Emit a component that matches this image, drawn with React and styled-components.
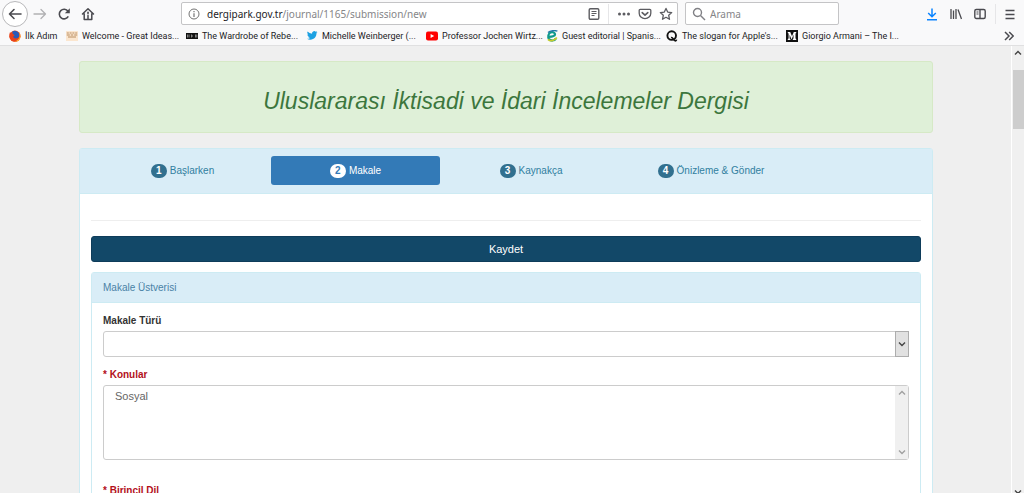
import React, { useState } from 'react';
import styled, { createGlobalStyle } from 'styled-components';

const bookmarks = [
    { title: 'İlk Adım', icon: 'firefox' },
    { title: 'Welcome - Great Ideas...', icon: 'ideas' },
    { title: 'The Wardrobe of Rebe...', icon: 'wardrobe' },
    { title: 'Michelle Weinberger (...', icon: 'twitter' },
    { title: 'Professor Jochen Wirtz...', icon: 'youtube' },
    { title: 'Guest editorial | Spanis...', icon: 'emerald' },
    { title: "The slogan for Apple's...", icon: 'quora' },
    { title: 'Giorgio Armani – The I...', icon: 'medium' }
];

const steps = ['Başlarken', 'Makale', 'Kaynakça', 'Önizleme & Gönder'];

function Favicon({ name }) {
    return (
        <svg width="12" height="12" viewBox="0 0 12 12" aria-hidden="true">
            {name === 'firefox' && (
                <>
                    <circle cx="6" cy="6.2" r="5.6" fill="#f0501e" />
                    <path d="M3.4 1.6a4.6 4.6 0 0 1 7 3.4c0 3-2 4.4-4 4.4S3 8 3.2 6z" fill="#2a5bb8" />
                    <path d="M.8 2.4C1.6 3 2.6 3 3.6 3.4c1 .5 1 1.4 2.2 1.8-.8.6-1.6.8-1.6 1.8 1 2 4.4 2 6.4-.8.4 3-1.8 5.4-4.6 5.4S.4 9.4.4 6.2C.4 4.6.5 3.4.8 2.4z" fill="#e8421c" />
                    <path d="M10.2 2.6c1.4 2 1.8 4.6.4 6.8-1 1.6-3 2.4-5 2 2.8-.6 4.800-2.400 5-4.800.1-1.400 0-2.800-.4-4z" fill="#ffb52e" />
                </>
            )}
            {name === 'ideas' && (
                <>
                    <rect y="1" width="12" height="10" fill="#fbe6cf" />
                    <path d="M.8 3h2M3.600 3h2M6.400 3h2M9.200 3h2M.8 5h3M4.800 5h2.400M8.200 5h3M2 7h8" stroke="#b98d62" strokeWidth="1.200" />
                </>
            )}
            {name === 'wardrobe' && (
                <>
                    <rect y="3" width="12" height="6" fill="#111" />
                    <path d="M1.500 4.500v3M3 4.500v3M5.500 4.500v3M7 6h-1M9.500 4.500v3M10.800 4.500v3" stroke="#bbb" strokeWidth=".7" />
                </>
            )}
            {name === 'twitter' && (
                <path
                    transform="translate(1 0) scale(.44)"
                    d="M23.600 4.900a9.900 9.900 0 0 1-2.800.8 4.900 4.900 0 0 0 2.200-2.700 9.800 9.800 0 0 1-3.100 1.200 4.900 4.900 0 0 0-8.400 4.500A14 14 0 0 1 1.300 3.600a4.900 4.900 0 0 0 1.500 6.600 4.900 4.900 0 0 1-2.200-.6v.1a4.900 4.900 0 0 0 3.900 4.800 5 5 0 0 1-2.200.1 4.900 4.900 0 0 0 4.600 3.400A9.900 9.900 0 0 1 0 20a14 14 0 0 0 7.500 2.200c9.100 0 14-7.500 14-14v-.6a10 10 0 0 0 2.100-2.700z"
                    fill="#1da1e2"
                />
            )}
            {name === 'youtube' && (
                <>
                    <rect y="1.500" width="12" height="9" rx="2" fill="#f00" />
                    <path d="M4.600 4v4L8.200 6z" fill="#fff" />
                </>
            )}
            {name === 'emerald' && (
                <>
                    <path d="M9.800 8.600C8.400 11 4.800 11.200 3 9c-1.400-2-.8-5.200 1.400-6.400C6.600 1.400 9.400 2.600 9 4.600 8.600 6 6 6.600 3 6.800" fill="none" stroke="#0f9a8c" strokeWidth="2.200" />
                    <path d="M2 9.400c2 2 6.400 1.800 8.800-1.800" fill="none" stroke="#c5cc2b" strokeWidth="1.800" />
                    <path d="M2 2.600C4.400.4 9 .2 11.400 1.200" fill="none" stroke="#2177a8" strokeWidth="1.400" />
                </>
            )}
            {name === 'quora' && (
                <>
                    <circle cx="5.700" cy="5.600" r="4.300" fill="none" stroke="#111" strokeWidth="1.900" />
                    <path d="M5 7.600c2-.6 2.800 3 4 3.200.8.200 1.400-.3 1.500-1.100" fill="none" stroke="#111" strokeWidth="1.600" />
                </>
            )}
            {name === 'medium' && (
                <>
                    <rect width="12" height="12" fill="#111" />
                    <path d="M1.800 2h2.400L6 6.200 7.800 2h2.400v1l-.7.500v5l.7.500v1H6.800V9l.7-.5V4.800L5.600 9.500 3.600 4.800v3.700l.8.500v1H1.800V9l.8-.5v-5L1.800 3z" fill="#fff" />
                </>
            )}
        </svg>
    );
}

function Chevron({ up, size = 8 }) {
    return (
        <svg width={size} height={size} viewBox="0 0 8 8" fill="none" stroke="currentColor" strokeWidth="1.400" aria-hidden="true">
            <path d={up ? 'M1 5.500l3-3 3 3' : 'M1 2.500l3 3 3-3'} />
        </svg>
    );
}

function BrowserBar() {
    return (
        <Chrome>
            <Toolbar>
                <NavButtons>
                    <BackButton type="button" aria-label="Geri">
                        <svg width="14" height="14" viewBox="0 0 14 14" fill="none" stroke="#4a4a4f" strokeWidth="1.600" strokeLinecap="round" strokeLinejoin="round">
                            <path d="M13 7H1.500M6 2.500L1.500 7 6 11.500" />
                        </svg>
                    </BackButton>
                    <IconButton type="button" aria-label="İleri">
                        <svg width="14" height="14" viewBox="0 0 14 14" fill="none" stroke="#b1b1b3" strokeWidth="1.300" strokeLinecap="round" strokeLinejoin="round">
                            <path d="M1 7h11.500M8 2.500L12.500 7 8 11.500" />
                        </svg>
                    </IconButton>
                    <IconButton type="button" aria-label="Yenile">
                        <svg width="14" height="14" viewBox="0 0 14 14" fill="none" stroke="#4a4a4f" strokeWidth="1.600">
                            <path d="M11.300 9.400A4.800 4.800 0 1 1 11 4.200" />
                            <path d="M12.800 1.200v5H7.800z" fill="#4a4a4f" stroke="none" />
                        </svg>
                    </IconButton>
                    <IconButton type="button" aria-label="Ana sayfa">
                        <svg width="14" height="14" viewBox="0 0 14 14" fill="none" stroke="#4a4a4f" strokeWidth="1.500" strokeLinejoin="round" strokeLinecap="round">
                            <path d="M1.500 7L7 1.700 12.500 7M3.200 6.800v5.700h7.600V6.800M7 12V8.500" />
                            <path d="M7 5.300v1.400" />
                        </svg>
                    </IconButton>
                </NavButtons>
                <UrlBar>
                    <svg width="12" height="12" viewBox="0 0 12 12" fill="none" stroke="#737373" aria-hidden="true">
                        <circle cx="6" cy="6" r="5" />
                        <path d="M6 5.200V9M6 3v1.200" strokeWidth="1.200" />
                    </svg>
                    <Address>
                        dergipark.gov.tr<AddressPath>/journal/1165/submission/new</AddressPath>
                    </Address>
                    <UrlActions>
                        <IconButton type="button" aria-label="Okuyucu görünümü">
                            <svg width="12" height="14" viewBox="0 0 12 14" fill="none" stroke="#5c5c61">
                                <rect x="1.200" y="1.700" width="9.600" height="10.600" rx="1.200" strokeWidth="1.400" />
                                <path d="M3.500 4.500h5M3.500 6.500h5M3.500 8.500h3" />
                            </svg>
                        </IconButton>
                        <Divider $space="1px" />
                        <IconButton type="button" aria-label="Sayfa eylemleri">
                            <svg width="14" height="14" viewBox="0 0 14 14" fill="#5c5c61">
                                <circle cx="2.500" cy="7" r="1.500" />
                                <circle cx="7" cy="7" r="1.500" />
                                <circle cx="11.500" cy="7" r="1.500" />
                            </svg>
                        </IconButton>
                        <IconButton type="button" aria-label="Pocket'a kaydet">
                            <svg width="14" height="14" viewBox="0 0 14 14" fill="none" stroke="#5c5c61" strokeWidth="1.300" strokeLinecap="round" strokeLinejoin="round">
                                <path d="M2.200 2.300h9.600a1 1 0 0 1 1 1v2.900a5.800 5.400 0 0 1-11.600 0V3.300a1 1 0 0 1 1-1z" />
                                <path d="M4.200 5.600L7 8.200l2.800-2.600" strokeWidth="1.600" />
                            </svg>
                        </IconButton>
                        <IconButton type="button" aria-label="Yer imlerine ekle">
                            <svg width="14" height="14" viewBox="0 0 14 14" fill="none" stroke="#5c5c61" strokeWidth="1.300" strokeLinejoin="round">
                                <path d="M7 1.400l1.700 3.700 4 .5-3 2.700.8 4L7 10.300l-3.500 2 .8-4-3-2.700 4-.5z" />
                            </svg>
                        </IconButton>
                    </UrlActions>
                </UrlBar>
                <SearchBar>
                    <svg width="14" height="14" viewBox="0 0 14 14" fill="none" stroke="#808085" strokeWidth="1.400" aria-hidden="true">
                        <circle cx="5.500" cy="5.500" r="4" />
                        <path d="M8.500 8.500l4.500 4.500" />
                    </svg>
                    <SearchInput type="search" aria-label="Arama" placeholder="Arama" />
                </SearchBar>
                <Tools>
                    <IconButton type="button" aria-label="İndirilenler">
                        <svg width="12" height="14" viewBox="0 0 12 14" fill="none" stroke="#0a84ff" strokeWidth="1.500">
                            <path d="M6 1.500v8M2.200 6L6 9.700 9.800 6M1 12.700h10" />
                        </svg>
                    </IconButton>
                    <IconButton type="button" aria-label="Kitaplık">
                        <svg width="12" height="14" viewBox="0 0 12 14" fill="none" stroke="#4a4a4f" strokeWidth="1.300">
                            <path d="M1 2v10M3.500 3.500V12M6 2v10M8 2.500l3.500 9.500" />
                        </svg>
                    </IconButton>
                    <IconButton type="button" aria-label="Kenar çubuğu">
                        <svg width="12" height="14" viewBox="0 0 12 14" fill="none" stroke="#4a4a4f" strokeWidth="1.400">
                            <rect x=".8" y="2.500" width="10.400" height="9" rx="1.500" />
                            <path d="M6 2.500v9" />
                            <path d="M2.500 5h2M2.500 7h2" strokeWidth="1" />
                        </svg>
                    </IconButton>
                    <Divider $space="-3px" />
                    <IconButton type="button" aria-label="Menü">
                        <svg width="10" height="14" viewBox="0 0 10 14" fill="none" stroke="#4a4a4f" strokeWidth="1.400">
                            <path d="M.5 3.500h9M.5 7.500h9M.5 11.500h9" />
                        </svg>
                    </IconButton>
                </Tools>
            </Toolbar>
            <BookmarkBar>
                {bookmarks.map(bookmark => (
                    <Bookmark key={bookmark.title} href="#">
                        <Favicon name={bookmark.icon} />
                        {bookmark.title}
                    </Bookmark>
                ))}
                <MoreButton type="button" aria-label="Diğer yer imleri">
                    <svg width="10" height="10" viewBox="0 0 10 10" fill="none" stroke="#4a4a4f" strokeWidth="1.500">
                        <path d="M1 1l4 4-4 4M5.200 1l4 4-4 4" />
                    </svg>
                </MoreButton>
            </BookmarkBar>
        </Chrome>
    );
}

function App() {
    const [step, setStep] = useState(1);

    return (
        <Window>
            <GlobalStyle />
            <BrowserBar />
            <Viewport>
                <Page>
                    <Banner>
                        <JournalTitle>Uluslararası İktisadi ve İdari İncelemeler Dergisi</JournalTitle>
                    </Banner>
                    <Panel>
                        <Steps>
                            {steps.map((label, index) => (
                                <Step key={label} type="button" $active={index === step} onClick={() => setStep(index)}>
                                    <Badge $active={index === step}>{index + 1}</Badge>
                                    {label}
                                </Step>
                            ))}
                        </Steps>
                        <PanelBody>
                            <Rule />
                            <SaveButton type="submit">Kaydet</SaveButton>
                            <Panel>
                                <PanelHeading>Makale Üstverisi</PanelHeading>
                                <Fields>
                                    <Label htmlFor="type">Makale Türü</Label>
                                    <SelectWrap>
                                        <Select id="type" />
                                        <SelectArrow><Chevron /></SelectArrow>
                                    </SelectWrap>
                                    <Label htmlFor="topics" $required>* Konular</Label>
                                    <ListWrap>
                                        <ListBox id="topics" multiple size="4">
                                            <option>Sosyal</option>
                                        </ListBox>
                                        <ListScroll>
                                            <Chevron up />
                                            <Chevron />
                                        </ListScroll>
                                    </ListWrap>
                                    <Label htmlFor="language" $required>* Birincil Dil</Label>
                                    <SelectWrap>
                                        <Select id="language" />
                                        <SelectArrow><Chevron /></SelectArrow>
                                    </SelectWrap>
                                </Fields>
                            </Panel>
                        </PanelBody>
                    </Panel>
                </Page>
                <ScrollBar>
                    <Chevron up />
                    <Thumb />
                    <Chevron />
                </ScrollBar>
            </Viewport>
        </Window>
    );
}

export default App;

const GlobalStyle = createGlobalStyle`
    * {
        box-sizing: border-box;
    }

    body {
        margin: 0;
        background: #efefef;
        font-family: "Liberation Sans", Arial, sans-serif;
    }

    button, input, select {
        font-family: inherit;
    }
`;

const Window = styled.div`
    display: flex;
    flex-direction: column;
    height: 100vh;
    overflow: hidden;
`;

const Chrome = styled.header`
    background: #f9f9fa;
    border-bottom: 1px solid #e0e0e1;
    font-family: "Noto Sans", sans-serif;
`;

const Toolbar = styled.div`
    display: flex;
    align-items: center;
    height: 27px;
    padding: 0 9px 0 2px;
`;

const NavButtons = styled.div`
    display: flex;
    align-items: center;
    gap: 10px;
    flex: 0 0 179px;
`;

const IconButton = styled.button`
    display: flex;
    padding: 0;
    border: 0;
    background: none;
`;

const BackButton = styled(IconButton)`
    align-items: center;
    justify-content: center;
    width: 26px;
    height: 26px;
    margin-right: -5px;
    border: 1px solid #b8b8ba;
    border-radius: 50%;
    background: #fff;
`;

const UrlBar = styled.div`
    display: flex;
    align-items: center;
    flex: 1;
    height: 23px;
    padding: 0 4px 0 6px;
    border: 1px solid #c4c4c6;
    border-radius: 2px;
    background: #fff;
`;

const Address = styled.span`
    margin-left: 7px;
    color: #1c1c1f;
    font-size: 10px;
    white-space: nowrap;
`;

const AddressPath = styled.span`
    color: #858588;
`;

const UrlActions = styled.div`
    display: flex;
    align-items: center;
    gap: 7px;
    margin-left: auto;
`;

const Divider = styled.span`
    width: 1px;
    height: 20px;
    margin: 0 ${props => props.$space};
    background: #e6e6e8;
`;

const SearchBar = styled.div`
    display: flex;
    align-items: center;
    gap: 4px;
    flex: 0 0 154px;
    min-width: 0;
    height: 23px;
    margin-left: 7px;
    padding: 0 6px;
    border: 1px solid #c4c4c6;
    border-radius: 2px;
    background: #fff;

    svg {
        flex: none;
    }
`;

const SearchInput = styled.input`
    flex: 1;
    min-width: 0;
    padding: 0;
    border: 0;
    outline: 0;
    background: none;
    font-size: 10px;

    &::placeholder {
        color: #858588;
    }
`;

const Tools = styled.div`
    display: flex;
    align-items: center;
    justify-content: flex-end;
    gap: 12px;
    flex: 0 0 176px;
`;

const BookmarkBar = styled.nav`
    display: flex;
    align-items: center;
    gap: 8px;
    height: 18px;
    padding: 0 10px 0 9px;
    font-family: Roboto, "Noto Sans", sans-serif;
`;

const Bookmark = styled.a`
    display: flex;
    align-items: center;
    gap: 4px;
    width: 112px;
    color: #1c1c1f;
    font-size: 9px;
    line-height: 14px;
    text-decoration: none;
    white-space: nowrap;

    &:first-child {
        width: 49px;
    }

    svg {
        flex: none;
    }
`;

const MoreButton = styled(IconButton)`
    margin-left: auto;
`;

const Viewport = styled.div`
    display: flex;
    flex: 1;
    min-height: 0;
`;

const Page = styled.main`
    flex: 1;
    overflow: hidden;
    padding: 15px 78px 0 79px;
`;

const Banner = styled.div`
    padding: 24px 12px 16px;
    margin-bottom: 15px;
    border: 1px solid #d6e9c6;
    border-radius: 3px;
    background: #dff0d8;
    text-align: center;
`;

const JournalTitle = styled.h1`
    margin: 0;
    color: #3c763d;
    font-size: 23px;
    font-style: italic;
    font-weight: 400;
    line-height: 30px;
`;

const Panel = styled.section`
    border: 1px solid #cdebf3;
    border-radius: 3px;
    background: #fff;
`;

const Steps = styled.nav`
    display: grid;
    grid-template-columns: 173fr 169fr 178fr 178fr 115fr;
    gap: 2px;
    padding: 7px 15px 8px 16px;
    border-bottom: 1px solid #cdebf3;
    background: #d9edf7;
`;

const Step = styled.button`
    display: flex;
    align-items: center;
    justify-content: center;
    gap: 3px;
    height: 29px;
    padding: 0;
    border: 0;
    border-radius: 3px;
    background: ${props => (props.$active ? '#337ab7' : 'transparent')};
    color: ${props => (props.$active ? '#fff' : '#31809f')};
    font-size: 10px;
`;

const Badge = styled.span`
    width: 16px;
    border-radius: 8px;
    background: ${props => (props.$active ? '#fff' : '#31708f')};
    color: ${props => (props.$active ? '#337ab7' : '#fff')};
    font-weight: 700;
    line-height: 14px;
`;

const PanelBody = styled.div`
    padding: 26px 11px 0;
`;

const Rule = styled.hr`
    margin: 0 0 15px;
    border: 0;
    border-top: 1px solid #eee;
`;

const SaveButton = styled.button`
    display: block;
    width: 100%;
    height: 26px;
    margin-bottom: 10px;
    border: 1px solid #0e3c5a;
    border-radius: 3px;
    background: #124868;
    color: #fff;
    font-size: 11px;
`;

const PanelHeading = styled.h2`
    margin: 0;
    padding: 7px 11px;
    border-bottom: 1px solid #cdebf3;
    background: #d9edf7;
    color: #4a82a6;
    font-size: 10px;
    font-weight: 400;
    line-height: 15px;
`;

const Fields = styled.div`
    padding: 11px;
`;

const Label = styled.label`
    display: block;
    margin-bottom: 3px;
    color: ${props => (props.$required ? '#b30f1b' : '#333')};
    font-size: 10px;
    font-weight: 700;
    line-height: 14px;
`;

const SelectWrap = styled.div`
    position: relative;
    margin-bottom: 11px;
`;

const Select = styled.select`
    display: block;
    width: 100%;
    height: 26px;
    padding: 0 12px;
    border: 1px solid #ccc;
    border-radius: 3px;
    background: #fff;
    appearance: none;
    font-size: 11px;
`;

const SelectArrow = styled.span`
    position: absolute;
    top: 0;
    right: 0;
    bottom: 0;
    display: flex;
    align-items: center;
    justify-content: center;
    width: 14px;
    border: 1px solid #adadad;
    background: #e1e1e1;
    color: #444;
    pointer-events: none;
`;

const ListWrap = styled.div`
    display: flex;
    height: 75px;
    margin-bottom: 24px;
    border: 1px solid #ccc;
    border-radius: 3px;
`;

const ListBox = styled.select`
    flex: 1;
    padding: 4px 0;
    border: 0;
    outline: 0;
    overflow: hidden;
    background: none;
    color: #666;
    font-size: 11px;

    option {
        padding: 0 11px;
        line-height: 14px;
    }
`;

const ListScroll = styled.div`
    display: flex;
    flex-direction: column;
    align-items: center;
    justify-content: space-between;
    width: 13px;
    padding: 3px 0;
    background: #f0f0f0;
    color: #a0a0a0;
`;

const ScrollBar = styled.div`
    display: flex;
    flex-direction: column;
    align-items: center;
    width: 13px;
    padding-top: 3px;
    border-left: 1px solid #fff;
    background: #f0f0f0;
    color: #444;

    svg {
        flex: none;
    }

    svg:last-child {
        margin-top: auto;
        margin-bottom: -3px;
    }
`;

const Thumb = styled.div`
    width: 11px;
    height: 59px;
    margin-top: 13px;
    background: #cdcdcd;
`;
